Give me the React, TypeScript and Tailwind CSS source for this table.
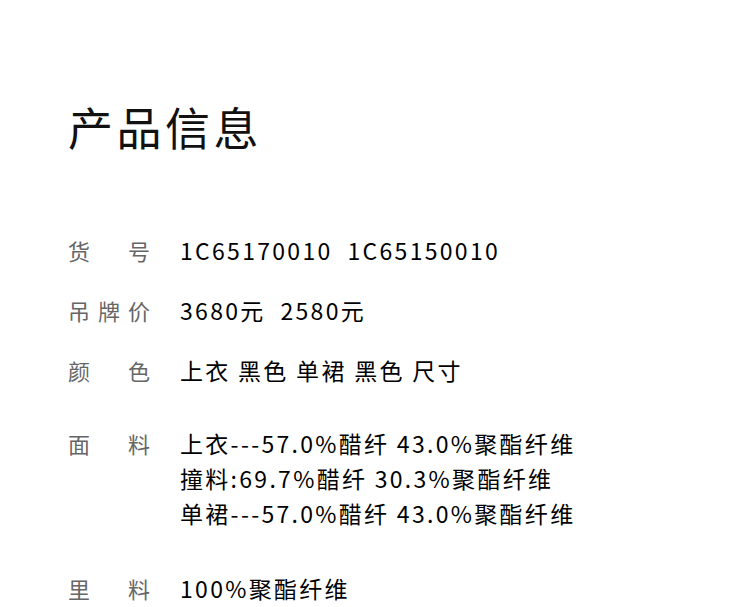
import React from 'react';

type Row = { label: string[]; lines: string[]; gap: string };

const rows: Row[] = [
  { label: ['货', '号'], lines: ['1C65170010  1C65150010'], gap: 'mt-0' },
  { label: ['吊', '牌', '价'], lines: ['3680元  2580元'], gap: 'mt-[25px]' },
  { label: ['颜', '色'], lines: ['上衣 黑色 单裙 黑色 尺寸'], gap: 'mt-[25px]' },
  {
    label: ['面', '料'],
    lines: [
      '上衣---57.0%醋纤 43.0%聚酯纤维',
      '撞料:69.7%醋纤 30.3%聚酯纤维',
      '单裙---57.0%醋纤 43.0%聚酯纤维',
    ],
    gap: 'mt-[38px]',
  },
  { label: ['里', '料'], lines: ['100%聚酯纤维'], gap: 'mt-[40px]' },
];

export default function App() {
  return (
    <div
      className="w-[750px] h-[607px] overflow-hidden bg-white pl-[68px] pt-[97px]"
      style={{ fontFamily: '"Noto Sans CJK SC", "Noto Sans", sans-serif' }}
    >
      <h1 className="text-[45px] leading-[60px] tracking-[3.5px] text-[#111] font-normal">产品信息</h1>

      <div className="mt-[76px]">
        {rows.map((row) => (
          <div key={row.label.join('')} className={`flex ${row.gap}`}>
            <div className="w-[82px] shrink-0 flex justify-between text-[22px] leading-[35px] text-[#666]">
              {row.label.map((c) => (
                <span key={c}>{c}</span>
              ))}
            </div>
            <div className="ml-[30px] text-[23px] leading-[35px] tracking-[2.3px] text-black whitespace-pre">
              {row.lines.map((l) => (
                <div key={l}>{l}</div>
              ))}
            </div>
          </div>
        ))}
      </div>
    </div>
  );
}
